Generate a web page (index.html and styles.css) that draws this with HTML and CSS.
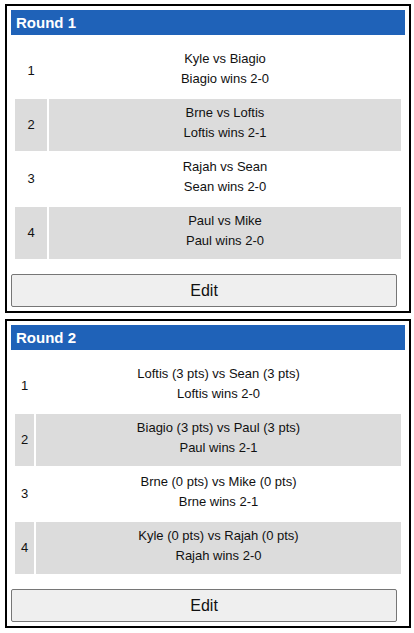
FILE: index.html
```html
<!DOCTYPE html>
<html>
<head>
<meta charset="utf-8">
<link rel="stylesheet" href="styles.css">
</head>
<body>
<div class="round round-1">
  <h3 class="round-title">Round 1</h3>
  <table class="matches">
    <tr><td class="num">1</td><td class="match"><div>Kyle vs Biagio</div><div>Biagio wins 2-0</div></td></tr>
    <tr class="alt"><td class="num">2</td><td class="match"><div>Brne vs Loftis</div><div>Loftis wins 2-1</div></td></tr>
    <tr><td class="num">3</td><td class="match"><div>Rajah vs Sean</div><div>Sean wins 2-0</div></td></tr>
    <tr class="alt"><td class="num">4</td><td class="match"><div>Paul vs Mike</div><div>Paul wins 2-0</div></td></tr>
  </table>
  <button class="edit">Edit</button>
</div>
<div class="round round-2">
  <h3 class="round-title">Round 2</h3>
  <table class="matches">
    <tr><td class="num">1</td><td class="match"><div>Loftis (3 pts) vs Sean (3 pts)</div><div>Loftis wins 2-0</div></td></tr>
    <tr class="alt"><td class="num">2</td><td class="match"><div>Biagio (3 pts) vs Paul (3 pts)</div><div>Paul wins 2-1</div></td></tr>
    <tr><td class="num">3</td><td class="match"><div>Brne (0 pts) vs Mike (0 pts)</div><div>Brne wins 2-1</div></td></tr>
    <tr class="alt"><td class="num">4</td><td class="match"><div>Kyle (0 pts) vs Rajah (0 pts)</div><div>Rajah wins 2-0</div></td></tr>
  </table>
  <button class="edit">Edit</button>
</div>
</body>
</html>
```
FILE: styles.css
```css
html, body {
  margin: 0;
  background: #fff;
}
body {
  padding: 4px 3px 0 5px;
  font-family: "Liberation Sans", Arial, sans-serif;
  color: #111;
}
.round {
  border: 2px solid #000;
  padding: 4px;
  margin-bottom: 6px;
}
.round-title {
  margin: 0;
  height: 25px;
  line-height: 25px;
  padding-left: 5px;
  background: #1f62b8;
  color: #fff;
  font-size: 15px;
  font-weight: bold;
}
.matches {
  width: calc(100% - 4px);
  margin: 8px 2px 0;
  border-spacing: 2px;
  border-collapse: separate;
  font-size: 13px;
  line-height: 20px;
}
.matches td {
  padding: 0;
  text-align: center;
  vertical-align: middle;
}
.matches td.match {
  padding: 4px 0 8px;
}
.matches .alt td {
  background: #dcdcdc;
}
.round-1 .num {
  width: 32px;
}
.round-2 .num {
  width: 19px;
}
.edit {
  display: block;
  width: 98%;
  height: 33px;
  margin: 13px 0 0;
  padding: 0;
  background: #efefef;
  border: 1px solid #767676;
  border-radius: 2px;
  font-family: "Liberation Sans", Arial, sans-serif;
  font-size: 16px;
  color: #111;
}
```
